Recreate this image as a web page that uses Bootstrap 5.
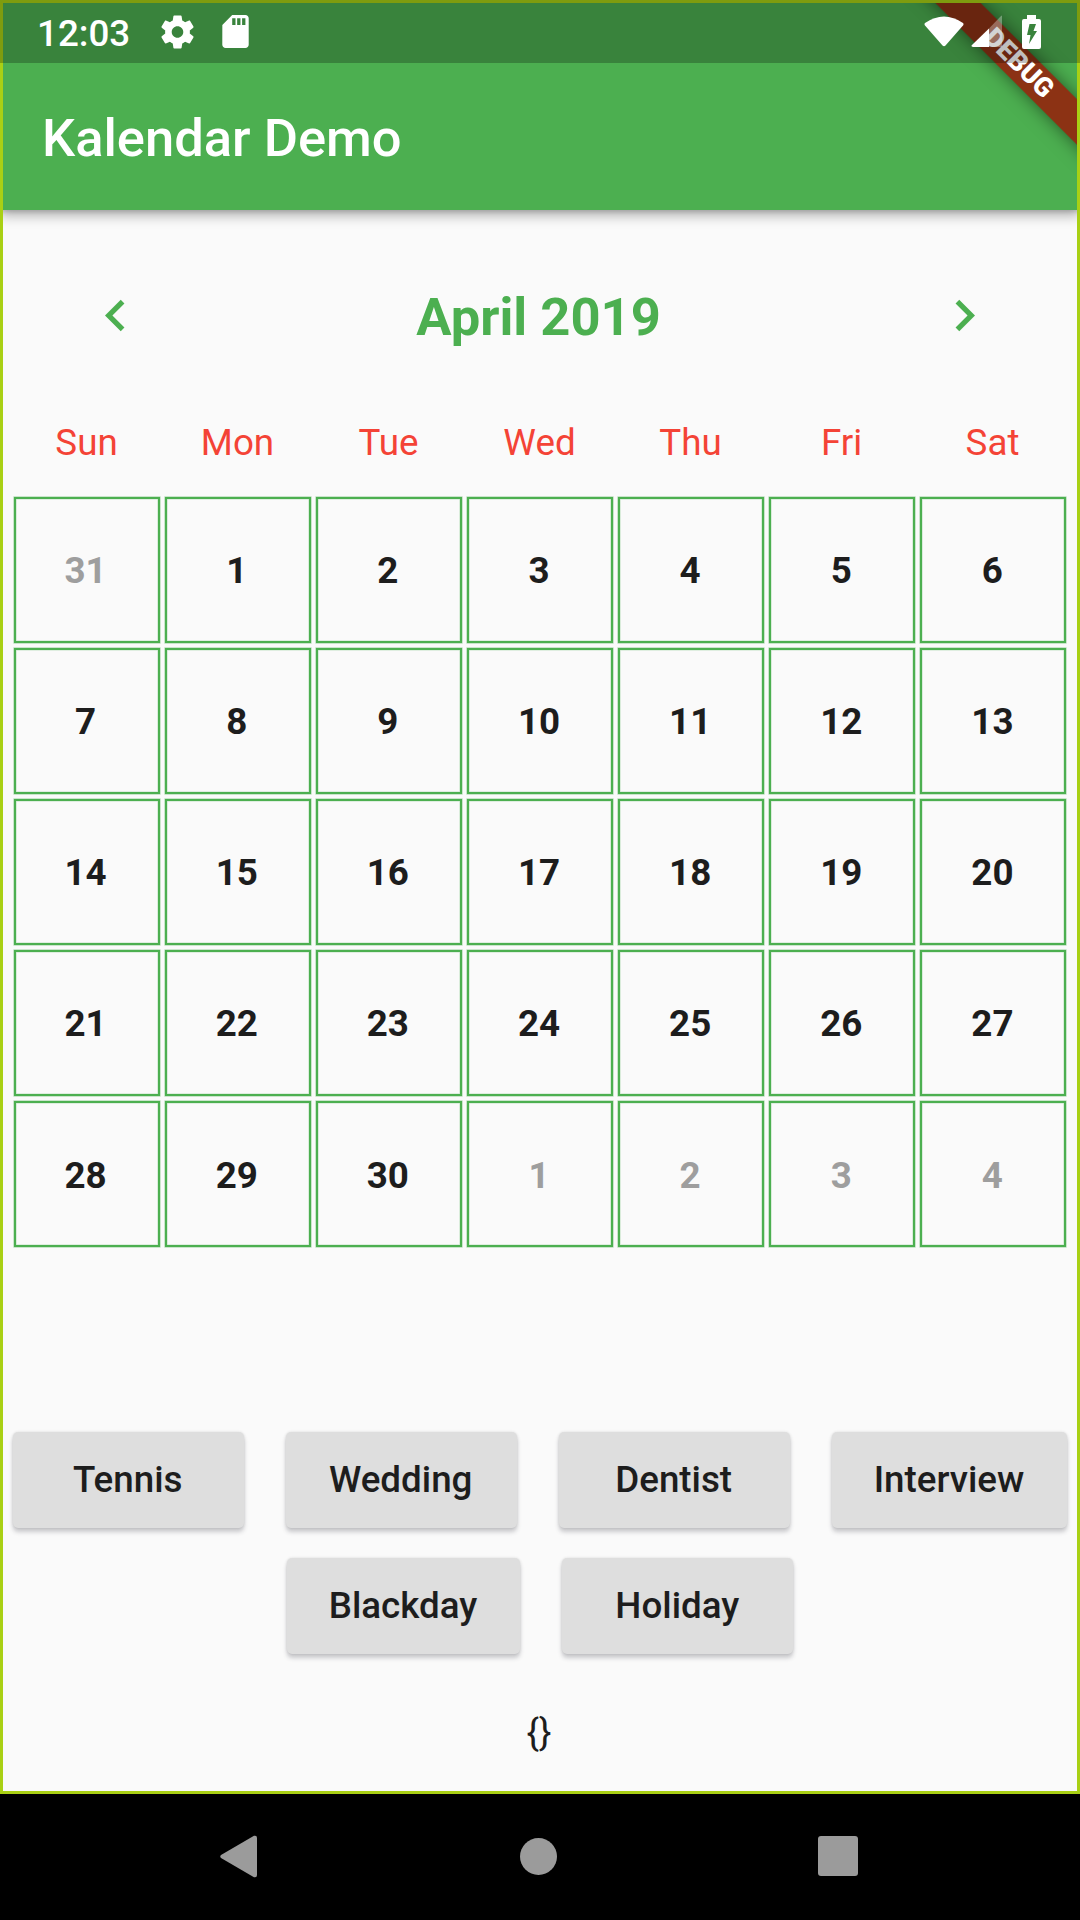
<!DOCTYPE html>
<html lang="en">
<head>
<meta charset="utf-8">
<meta name="viewport" content="width=device-width, initial-scale=1">
<title>Kalendar Demo</title>
<link href="https://cdn.jsdelivr.net/npm/bootstrap@5.3.0/dist/css/bootstrap.min.css" rel="stylesheet">
<style>
  body { font-family: Roboto, "Liberation Sans", sans-serif; background: #000; font-size: 36.75px; line-height: 1.17; color: #1d1d1d; }
  svg { display: block; flex: none; }
  .phone { width: 1080px; height: 1920px; }
  .app-screen { height: 1794px; background: #fafafa; }
  .app-screen::after { content: ""; position: absolute; inset: 0; border: 3px solid #a9d014; z-index: 2; pointer-events: none; }
  .app-head { height: 210px; background: #4caf50; box-shadow: 0 5px 12px rgba(0,0,0,.32), 0 2px 4px rgba(0,0,0,.12); }
  .status-strip { height: 63px; background: rgba(0,0,0,.25); z-index: 3; padding: 0 39px 0 37px; }
  .clock { width: 124px; line-height: 63px; padding-top: 3px; font-weight: 500; }
  .app-title { font-size: 52.5px; font-weight: 500; line-height: 1; padding-left: 42px; padding-top: 3px; }
  .ribbon-clip { inset: 0; overflow: hidden; z-index: 1; }
  .ribbon { width: 320px; height: 32px; left: 861px; top: 50px; padding-right: 7px; transform: rotate(45deg); background: rgba(152,26,8,.84); box-shadow: 0 0 18px rgba(0,0,0,.5); font-size: 26.8px; font-weight: 900; line-height: 31px; }
  .month-bar { height: 126px; padding: 0 84px; margin-top: 42px; color: #4caf50; }
  .month-name { font-size: 52.5px; line-height: 1; padding: 4px 3px 0 0; }
  .calendar { width: 1058px; margin: 0 auto; }
  .weekdays { height: 116px; color: #f44336; padding: 12px 1px 0 0; }
  .week { height: 151.14px; }
  .slot { flex: 1 1 0; min-width: 0; padding: 2.6px; }
  .day { height: 100%; border: 2px solid #4caf50; box-shadow: 0 0 0 .6px rgba(76,175,80,.45), inset 0 0 0 .6px rgba(76,175,80,.3); font-weight: 700; padding: 2px 2px 0 0; }
  .day.off { color: #9e9e9e; }
  .events { width: 1060px; margin: 182px auto 0; gap: 30px 42px; }
  .event-btn, .event-btn:hover { height: 96px; min-width: 231px; padding: 1px 43px 0 42px; border: 0; border-radius: 5px; background: #dedede; color: #1d1d1d; font-size: 36.75px; font-weight: 500; line-height: 1; box-shadow: 0 4px 4px rgba(60,60,70,.25), 0 0 3px rgba(0,0,0,.12); }
  .result { margin-top: 57px; padding-right: 2px; }
  .nav-strip { height: 126px; color: #9b9b9b; padding: 0 222px 2px 220px; }
</style>
</head>
<body>
<div class="phone d-flex flex-column">
  <main class="app-screen position-relative">
    <header class="app-head d-flex flex-column">
      <div class="status-strip position-relative d-flex align-items-center text-white">
        <div class="clock">12:03</div>
        <svg width="33" height="34" viewBox="2 2 20 20" fill="currentColor"><path d="M19.43 12.98c.04-.32.07-.64.07-.98s-.03-.66-.07-.98l2.11-1.65c.19-.15.24-.42.12-.64l-2-3.46c-.12-.22-.39-.3-.61-.22l-2.49 1c-.52-.4-1.08-.73-1.69-.98l-.38-2.65C14.46 2.18 14.25 2 14 2h-4c-.25 0-.46.18-.49.42l-.38 2.65c-.61.25-1.17.59-1.69.98l-2.49-1c-.23-.09-.49 0-.61.22l-2 3.46c-.13.22-.07.49.12.64l2.11 1.65c-.04.32-.07.65-.07.98s.03.66.07.98l-2.11 1.65c-.19.15-.24.42-.12.64l2 3.46c.12.22.39.3.61.22l2.49-1c.52.4 1.08.73 1.69.98l.38 2.65c.03.24.24.42.49.42h4c.25 0 .46-.18.49-.42l.38-2.65c.61-.25 1.17-.59 1.69-.98l2.49 1c.23.09.49 0 .61-.22l2-3.46c.12-.22.07-.49-.12-.64l-2.11-1.65zM12 15.5c-1.93 0-3.5-1.57-3.5-3.5s1.57-3.5 3.5-3.5 3.5 1.57 3.5 3.5-1.57 3.500-3.500 3.500z"/></svg>
        <svg class="ms-4 ps-1" width="31" height="33" viewBox="4 2 16 20" fill="currentColor"><path d="M18 2h-8L4.020 8 4 20c0 1.100.9 2 2 2h12c1.100 0 2-.9 2-2V4c0-1.100-.9-2-2-2zm-6 6h-2V4h2v4zm3 0h-2V4h2v4zm3 0h-2V4h2v4z"/></svg>
        <div class="ms-auto d-flex align-items-center">
          <svg width="40" height="32" viewBox="0 0 40 32" fill="currentColor"><path d="M1 7Q20-6 39 7Q40 8 39 9.500L21.500 29.500Q20 31 18.500 29.500L1 9.500Q0 8 1 7Z"/></svg>
          <svg style="margin-left:7px" width="33" height="33" viewBox="0 0 33 33" fill="currentColor"><path d="M31 1V32H18V13.500L30 1Q31 0 31 1Z" opacity=".32"/><path d="M18 13.500V32H2Q-.5 31.500 1 30Z"/></svg>
          <svg style="margin-left:18px" width="19" height="34" viewBox="0 0 19 34"><path fill="currentColor" d="M5 0H14V4H17Q19 4 19 6V32Q19 34 17 34H2Q0 34 0 32V6Q0 4 2 4H5Z"/><path fill="#39833c" d="M7.500 9H14L11.500 16H15L7 29L8.500 20H5Z"/></svg>
        </div>
      </div>
      <div class="flex-grow-1 d-flex align-items-center">
        <h1 class="app-title text-white mb-0">Kalendar Demo</h1>
      </div>
    </header>
    <div class="ribbon-clip position-absolute"><div class="ribbon position-absolute text-white text-center">DEBUG</div></div>

    <div class="month-bar d-flex align-items-center justify-content-between">
      <svg width="63" height="63" viewBox="0 0 24 24" fill="currentColor"><path d="M15.410 7.410L14 6l-6 6 6 6 1.410-1.410L10.830 12z"/></svg>
      <h2 class="month-name fw-bold mb-0">April 2019</h2>
      <svg width="63" height="63" viewBox="0 0 24 24" fill="currentColor"><path d="M10 6L8.590 7.410 13.170 12l-4.580 4.590L10 18l6-6z"/></svg>
    </div>

    <section class="calendar" id="calendar">
      <div class="weekdays d-flex align-items-center text-center"></div>
    </section>

    <div class="events d-flex flex-wrap justify-content-center">
      <button class="btn event-btn">Tennis</button>
      <button class="btn event-btn">Wedding</button>
      <button class="btn event-btn">Dentist</button>
      <button class="btn event-btn">Interview</button>
      <button class="btn event-btn">Blackday</button>
      <button class="btn event-btn">Holiday</button>
    </div>
    <div class="result text-center">{}</div>
  </main>

  <nav class="nav-strip d-flex align-items-center justify-content-between">
    <svg width="38" height="43" viewBox="0 0 38 43" fill="currentColor"><path d="M1 20L34 .8Q37 0 37 3V40Q37 43 34 42.200L1 23Q-.5 21.500 1 20Z"/></svg>
    <svg width="37" height="37" viewBox="0 0 37 37" fill="currentColor"><circle cx="18.500" cy="18.500" r="18.500"/></svg>
    <svg width="40" height="40" viewBox="0 0 40 40" fill="currentColor"><rect width="40" height="40" rx="3"/></svg>
  </nav>
</div>
<script src="https://cdn.jsdelivr.net/npm/bootstrap@5.3.0/dist/js/bootstrap.bundle.min.js"></script>
<script>
  const calendar = document.getElementById('calendar');
  calendar.querySelector('.weekdays').innerHTML =
    ['Sun', 'Mon', 'Tue', 'Wed', 'Thu', 'Fri', 'Sat'].map(d => `<div class="flex-fill w-100">${d}</div>`).join('');
  for (let w = 0; w < 5; w++) {
    const week = document.createElement('div');
    week.className = 'week d-flex';
    for (let d = 0; d < 7; d++) {
      const date = new Date(2019, 2, 31 + w * 7 + d);
      week.innerHTML += `<div class="slot"><div class="day d-flex align-items-center justify-content-center${date.getMonth() === 3 ? '' : ' off'}">${date.getDate()}</div></div>`;
    }
    calendar.append(week);
  }
</script>
</body>
</html>
